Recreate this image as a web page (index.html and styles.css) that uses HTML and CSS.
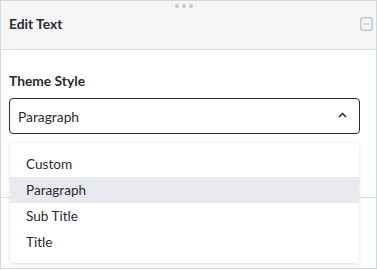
FILE: index.html
```html
<!DOCTYPE html>
<html>
<head>
<meta charset="utf-8">
<link rel="stylesheet" href="styles.css">
</head>
<body>
<div class="panel">
  <div class="header">
    <div class="grip"><span></span><span></span><span></span></div>
    <div class="title">Edit Text</div>
    <svg class="collapse" width="13" height="14" viewBox="0 0 13 14"><rect x="0.75" y="0.75" width="11.5" height="12.5" rx="2" fill="none" stroke="#c6c6ce" stroke-width="1.5"/><path d="M3.5 7h6" stroke="#c6c6ce" stroke-width="1.5"/></svg>
  </div>
  <div class="section">
    <div class="label">Theme Style</div>
    <div class="field">
      <div class="select">
        <span>Paragraph</span>
        <svg class="chev" width="9" height="6" viewBox="0 0 9 6"><path d="M1 5L4.5 1.5L8 5" fill="none" stroke="#22222c" stroke-width="1.5"/></svg>
      </div>
      <ul class="menu">
        <li>Custom</li>
        <li class="active">Paragraph</li>
        <li>Sub Title</li>
        <li>Title</li>
      </ul>
    </div>
  </div>
</div>
</body>
</html>
```
FILE: styles.css
```css
html, body { margin: 0; padding: 0; background: #fff; }
body { font-family: "Lato", "Liberation Sans", sans-serif; color: #2a2a34; }
.panel {
  width: 377px;
  height: 269px;
  box-sizing: border-box;
  border: 1px solid #d0d9e1;
  background: #fff;
}
.header {
  position: relative;
  height: 48px;
  background: #f6f6f7;
  border-bottom: 1px solid #d6dde4;
  display: flex;
  align-items: center;
  justify-content: space-between;
  padding: 0 3px 0 8px;
}
.grip {
  position: absolute;
  top: 3px;
  left: 174px;
  display: flex;
  gap: 3px;
}
.grip span {
  width: 4px; height: 4px; border-radius: 50%; background: #c4c4ca;
}
.title { font-size: 13.8px; font-weight: 700; margin-top: -4px; }
.collapse { margin-top: -3px; }
.section {
  height: 148px;
  box-sizing: border-box;
  border-bottom: 1px solid #d6dde4;
  padding: 23px 16px 0 8px;
}
.label { font-size: 13.8px; font-weight: 700; line-height: 16px; margin-bottom: 9px; }
.field { position: relative; }
.select {
  height: 36px;
  box-sizing: border-box;
  border: 1px solid #2c2c38;
  border-radius: 4px;
  display: flex;
  align-items: center;
  justify-content: space-between;
  padding: 0 12px 0 8px;
  font-size: 13.8px;
}
.chev { margin-top: -2px; }
.menu {
  position: absolute;
  top: 45px;
  left: 1px;
  right: 1px;
  margin: 0;
  padding: 8px 0;
  list-style: none;
  background: #fff;
  border-radius: 3px;
  box-shadow: 0 1px 4px rgba(0,0,0,0.13), 0 0 1px rgba(0,0,0,0.08);
  z-index: 2;
}
.menu li {
  height: 26px;
  line-height: 26px;
  padding-left: 16px;
  font-size: 13.6px;
}
.menu li.active { background: #e9eaef; }
```
